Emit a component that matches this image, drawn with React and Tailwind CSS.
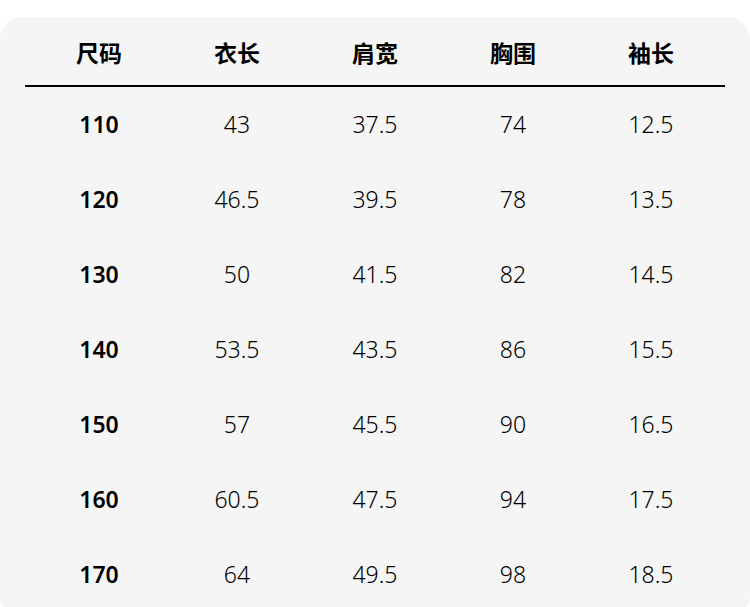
const headers = ["尺码", "衣长", "肩宽", "胸围", "袖长"];

const rows = [
  ["110", "43", "37.5", "74", "12.5"],
  ["120", "46.5", "39.5", "78", "13.5"],
  ["130", "50", "41.5", "82", "14.5"],
  ["140", "53.5", "43.5", "86", "15.5"],
  ["150", "57", "45.5", "90", "16.5"],
  ["160", "60.5", "47.5", "94", "17.5"],
  ["170", "64", "49.5", "98", "18.5"],
];

const App = () => {
  return (
    <div
      className="w-[750px] h-[607px] bg-white pt-[17px] overflow-hidden"
      style={{ fontFamily: '"Noto Sans", "Noto Sans CJK SC", sans-serif' }}
    >
      <div className="h-[600px] bg-[#f5f5f5] rounded-[22px] px-[25px] text-black">
        {/* header */}
        <div className="grid grid-cols-5 px-[5px] pt-[20px] pb-[16px] border-b-2 border-black">
          {headers.map((h) => (
            <div key={h} className="text-center text-[23px] leading-[32px] font-bold">
              {h}
            </div>
          ))}
        </div>

        {/* rows */}
        <div className="px-[5px]">
          {rows.map((r) => (
            <div key={r[0]} className="grid grid-cols-5 h-[75px] items-center">
              {r.map((v, i) => (
                <div
                  key={i}
                  className={
                    i === 0
                      ? "text-center text-[23px] font-semibold"
                      : "text-center text-[23px] font-light"
                  }
                >
                  {v}
                </div>
              ))}
            </div>
          ))}
        </div>
      </div>
    </div>
  );
};

export default App;
